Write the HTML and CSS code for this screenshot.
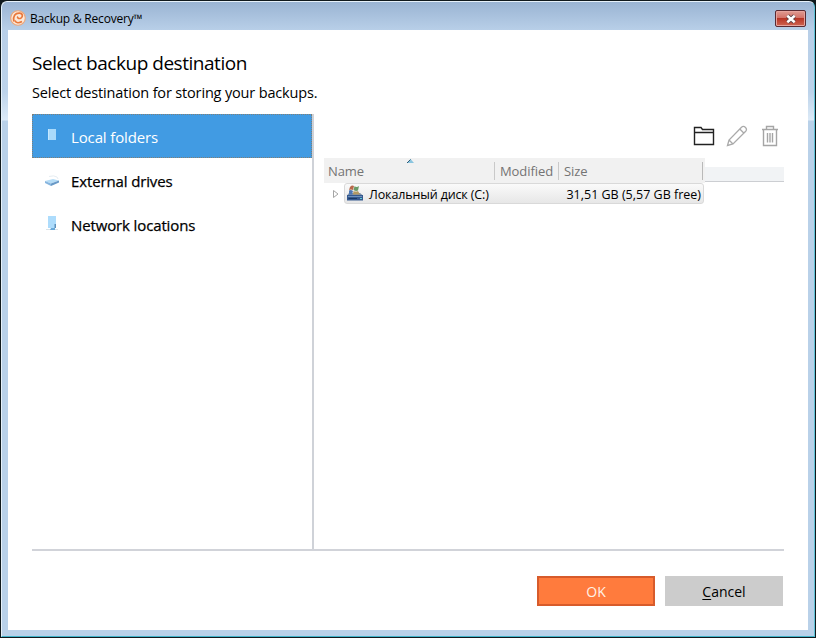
FILE: index.html
```html
<!DOCTYPE html>
<html lang="en">
<head>
<meta charset="utf-8">
<title>Backup &amp; Recovery</title>
<link rel="stylesheet" href="styles.css">
</head>
<body>
<div class="window">
  <header class="titlebar">
    <svg class="app-icon" width="16" height="16" viewBox="0 0 16 16">
      <circle cx="8" cy="8" r="7.3" fill="#fbe9da" stroke="#eda577" stroke-width="1.1"/>
      <path d="M3.800 11.500C2.800 6 5 3 9.500 3.200C13 3.500 13.200 7 10.800 8.200C8.800 9 7 8 7.800 6.500M5 10.500C6 13.300 9 13.300 12 11.500" fill="none" stroke="#e9783c" stroke-width="1.700"/>
    </svg>
    <span class="app-name">Backup &amp; Recovery™</span>
    <button class="close" aria-label="Close">
      <svg width="12" height="10" viewBox="0 0 12 10"><path d="M2.500 1.800L9.500 8.200M9.500 1.800L2.500 8.200" stroke="#574047" stroke-width="4.200"/><path d="M2.300 1.800L9.700 8.200M9.700 1.800L2.300 8.200" stroke="#fff" stroke-width="2.500"/></svg>
    </button>
  </header>
  <main class="content">
    <h1>Select backup destination</h1>
    <p class="lead">Select destination for storing your backups.</p>
    <div class="panes">
      <nav class="sidebar">
        <a class="item active">
          <svg width="16" height="16" viewBox="0 0 16 16"><path d="M4 1h8v11H4z" fill="#a9dafb"/><path d="M4 1h1v11H4z" fill="#c5e8ff"/></svg>
          <span class="local">Local folders</span>
        </a>
        <a class="item">
          <svg width="16" height="16" viewBox="0 0 16 16"><path d="M5 3.500Q10 2 13 4L14 6" fill="none" stroke="#e6edf2"/><path d="M1 8L9 6L15 7.500L7 10.500z" fill="#b5dcf6"/><path d="M1 8L7 10.500V13L1 10z" fill="#86b5df"/><path d="M7 10.500L15 7.500V9.500L7 13z" fill="#6899c7"/></svg>
          <span class="external">External drives</span>
        </a>
        <a class="item">
          <svg width="16" height="16" viewBox="0 0 16 16"><path d="M4 0h8v12H4z" fill="#addcfc"/><path d="M2 13.500h12" stroke="#d9e3e9"/><path d="M7 12h4v2H6z" fill="#69a9d9"/><path d="M10.500 8h1.500v4h-1.500z" fill="#5d8fba"/></svg>
          <span class="network">Network locations</span>
        </a>
      </nav>
      <section class="browser">
        <div class="toolbar">
          <svg width="22" height="22" viewBox="0 0 22 22" fill="none" stroke="#222" stroke-width="1.400"><path d="M1.500 19.500V2.500H8L9.500 4.500H20.500V19.500zM1.500 7.500H20.500"/></svg>
          <svg width="22" height="22" viewBox="0 0 22 22" fill="none" stroke="#aaa" stroke-width="1.300"><path d="M1.500 20.500L3 15L15.500 2.200Q17.500 .5 19.500 2.500Q21.300 4.500 19.700 6.300L7 19zM3 15L7 19M13.800 4L18 8.200"/></svg>
          <svg width="22" height="22" viewBox="0 0 22 22" fill="none" stroke="#a5a5a5" stroke-width="1.400"><path d="M3 4.500H19M7.500 4V1.500H14.500V4M4.500 5V20.500H17.500V5M8.500 8V17.500M11 8V17.500M13.500 8V17.500"/></svg>
        </div>
        <div class="columns">
          <div class="col name"><span>Name</span>
            <svg class="sort" width="7" height="4" viewBox="0 0 7 4"><path d="M0 4L3.500 0L7 4z" fill="#8ac5df"/><path d="M0 4L3.500 .5" stroke="#315c78"/></svg>
          </div>
          <div class="col modified"><span>Modified</span></div>
          <div class="col size"><span>Size</span></div>
          <div class="filler"></div>
        </div>
        <div class="row">
          <svg class="expander" width="8" height="10" viewBox="0 0 8 10"><path d="M1.500 1.500V8.500L6 5z" fill="#fff" stroke="#a5a5a5"/></svg>
          <div class="entry">
            <svg width="18" height="18" viewBox="0 0 18 18">
              <path d="M3 8H14L17 10.500H1z" fill="#7c8fa9"/><path d="M1 10H17V15.500H1z" fill="#35598f"/><path d="M2 11.500H16" stroke="#6d91bd"/><path d="M2.500 13.500H11" stroke="#183965"/><path d="M14 13.500h2" stroke="#5dcfda"/>
              <path d="M4 2Q6 -.2 8 1L7 5Q5 4 3 5z" fill="#b8694b"/><path d="M8.500 1.300Q11 2.700 13 1L12 5.500Q10 6.500 7.500 5z" fill="#6a9b68"/><path d="M3 5.500Q5 4.500 7 6L6 9.500H3z" fill="#4e78b5"/><path d="M7.500 6Q10 7 12 6L14 9.500H7z" fill="#b39a63"/>
            </svg>
            <span class="disk">Локальный диск (C:)</span>
            <span class="space">31,51 GB (5,57 GB free)</span>
          </div>
        </div>
      </section>
    </div>
    <footer class="actions">
      <button class="btn ok"><span>OK</span></button>
      <button class="btn cancel"><span><u>C</u>ancel</span></button>
    </footer>
  </main>
</div>
</body>
</html>
```
FILE: styles.css
```css
* { box-sizing: border-box; }
body {
  margin: 0;
  height: 638px;
  overflow: hidden;
  background: #10191d;
  font-family: "Open Sans", "Noto Sans", sans-serif;
  color: #000;
  padding: 1px 1px 1px;
}
button { font: inherit; padding: 0; border: 0; }
svg { display: block; flex: none; }
span, h1, p { white-space: nowrap; }
.window {
  height: 636px;
  padding: 0 6px 6px;
  border: 1px solid #e6f1fa;
  border-right-color: #5fc3d7;
  border-bottom-color: #40b3c9;
  border-radius: 6px 6px 0 0;
  background: linear-gradient(#9ab4d3 0, #b8cfe8 28px, #bdd3ea 90px, #dceaf7 118px, #b9d1e9 119px);
}
.titlebar {
  height: 28px;
  display: flex;
  align-items: flex-start;
  padding-left: 2px;
}
.app-icon { margin-top: 8px; }
.app-name {
  margin: 9px 0 0 4px;
  font-size: 12px;
  line-height: 16px;
  letter-spacing: -.2px;
}
.close {
  width: 31px;
  height: 17px;
  margin: 8px 2px 0 auto;
  display: flex;
  align-items: center;
  justify-content: center;
  border: 1px solid #592a32;
  border-radius: 2px;
  box-shadow: inset 0 0 0 1px #e6a39d;
  background: linear-gradient(#df9b92 0, #d27067 48%, #b73526 50%, #cf6552 100%);
}
.content {
  height: 600px;
  padding: 20px 24px 0;
  background: #fff;
}
h1 {
  margin: 0;
  font-size: 19px;
  font-weight: 400;
  line-height: 26px;
  letter-spacing: -.47px;
}
.lead {
  margin: 6px 0 0;
  font-size: 14.5px;
  line-height: 22px;
  letter-spacing: -.16px;
}
.panes {
  height: 437px;
  margin-top: 10px;
  display: flex;
  border-bottom: 2px solid #d1d3d9;
}
.sidebar { width: 282px; border-right: 2px solid #cfd2d8; }
.item {
  height: 44px;
  padding: 2px 0 0 12px;
  display: flex;
  align-items: center;
  font-size: 15px;
  line-height: 22px;
  letter-spacing: -.13px;
  -webkit-text-stroke: .25px currentColor;
}
.item svg { margin: 0 11px 0 0; }
.active {
  color: #fff;
  background: #419be3;
  border: 1px dotted #807f77;
  padding: 2px 0 0 11px;
  -webkit-text-stroke: 0;
}
.active svg { margin-top: -3px; }
.item:last-child svg { margin-top: -2px; }
.browser { width: 470px; padding-left: 10px; }
.toolbar {
  height: 44px;
  display: flex;
  justify-content: flex-end;
  align-items: flex-start;
  gap: 11px;
  padding: 11px 3px 0 0;
}
.columns {
  height: 25px;
  display: flex;
  align-items: flex-end;
  font-size: 13px;
  color: #747474;
}
.col {
  position: relative;
  height: 25px;
  padding: 4px 0 0 5px;
  line-height: 19px;
  letter-spacing: -.08px;
  background: #f1f1f1;
}
.col::after {
  content: "";
  position: absolute;
  right: 0;
  top: 4px;
  width: 1px;
  height: 18px;
  background: #c9c9c9;
}
.name { width: 171px; padding-left: 4px; }
.modified { width: 64px; }
.size { width: 146px; }
.size::after { right: 2px; background: #b9b9b9; }
.sort { position: absolute; left: 83px; top: 1px; }
.filler {
  flex: 1;
  height: 15px;
  margin-bottom: 1px;
  background: #f1f3f5;
  border-bottom: 1px solid #ccced2;
}
.row { display: flex; align-items: center; padding-left: 8px; height: 21px; }
.expander { margin-right: 4px; }
.entry {
  width: 360px;
  height: 21px;
  padding: 0 2px;
  display: flex;
  align-items: center;
  font-size: 12.5px;
  line-height: 19px;
  border: 1px solid #d9d9d9;
  border-radius: 3px;
  background: linear-gradient(#fafafa, #e7e7e7);
}
.entry svg { margin-left: -1px; }
.entry span { padding-top: 2px; }
.disk { margin-left: 5px; letter-spacing: -.13px; }
.space { margin-left: auto; }
.actions {
  display: flex;
  justify-content: flex-end;
  gap: 10px;
  padding: 25px 1px 0 0;
}
.btn {
  width: 118px;
  height: 30px;
  font-size: 14px;
  line-height: 26px;
}
.btn span { display: block; padding-top: 1px; }
.ok {
  color: #fff2e5;
  background: #ff7b3d;
  border: 2px solid #d75b2b;
}
.cancel { background: #ccc; }
.cancel u { text-underline-offset: 2px; }
```
